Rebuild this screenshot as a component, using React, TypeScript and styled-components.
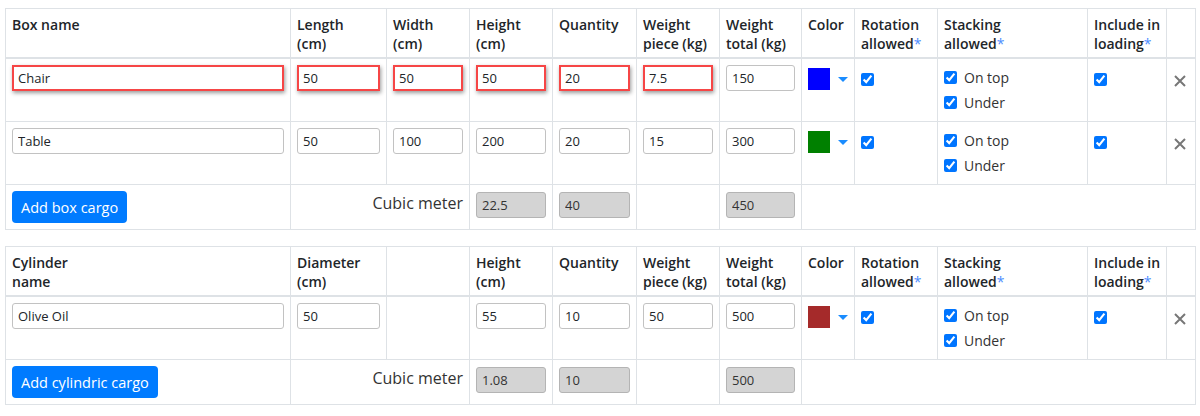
import * as React from 'react';
import styled, { createGlobalStyle } from 'styled-components';

const GlobalStyle = createGlobalStyle`
  body {
    margin: 0;
    padding: 8px 5px;
    background: #fff;
    color: #212529;
    font-family: "Open Sans", "Noto Sans", sans-serif;
  }
`;

const COLUMN_WIDTHS = [285, 96, 83, 83, 84, 83, 82, 53, 83, 150, 79, 29];

interface ICargoRow {
  name: string;
  dims: (string | null)[];
  quantity: string;
  weightPiece: string;
  weightTotal: string;
  color: string;
  invalid?: boolean;
}

interface ICargoTableProps {
  headers: string[][];
  rows: ICargoRow[];
  buttonLabel: string;
  totals: { volume: string; quantity: string; weight: string };
}

const TableElm = styled.table`
  width: 1190px;
  table-layout: fixed;
  border-collapse: collapse;
  margin-bottom: 16px;
  font-size: 15px;
`;

const HeadCell = styled.th`
  border: 1px solid #dee2e6;
  border-bottom: 2px solid #dee2e6;
  padding: 6px 6px 4px;
  text-align: left;
  vertical-align: top;
  font-weight: 600;
  line-height: 19px;
  font-size: 14px;
  white-space: nowrap;
  overflow: hidden;
`;

const Star = styled.span`
  color: #4c8dff;
  font-weight: 400;
`;

const Cell = styled.td<{ $align?: 'left' | 'right' }>`
  border: 1px solid #dee2e6;
  padding: 6px;
  vertical-align: top;
  text-align: ${(p) => p.$align || 'left'};
`;

const TextInput = styled.input<{ $invalid?: boolean }>`
  display: block;
  box-sizing: border-box;
  width: 100%;
  height: 26px;
  font-family: "Open Sans", sans-serif;
  font-size: 13px;
  color: #212529;
  background: #fff;
  border: ${(p) => (p.$invalid ? '2px solid #f64646' : '1px solid #c2c2c2')};
  border-radius: ${(p) => (p.$invalid ? '0' : '3px')};
  box-shadow: ${(p) => (p.$invalid ? '1px 2px 4px rgba(0, 0, 0, 0.4)' : 'none')};
  padding: 0 0 0 ${(p) => (p.$invalid ? '4px' : '5px')};
  outline: none;
`;

const ReadOnlyInput = styled(TextInput)`
  margin-top: 1px;
  background: #d4d4d4;
  border: 1px solid #b4b4b4;
  color: #333;
`;

const AddButton = styled.button`
  display: block;
  height: 32px;
  padding: 0 9px;
  border: none;
  border-radius: 4px;
  background: #007bff;
  color: #fff;
  font-family: "Open Sans", sans-serif;
  font-size: 14.5px;
  white-space: nowrap;
`;

const Caption = styled.span`
  display: block;
  font-size: 16px;
  line-height: 24px;
  color: #333;
`;

const ColorPicker = styled.div`
  display: flex;
  align-items: center;
  gap: 8px;
  margin-top: 3px;
`;

const Swatch = styled.span<{ $color: string }>`
  display: block;
  width: 23px;
  height: 22px;
  background: ${(p) => p.$color};
`;

const Caret = styled.span`
  width: 0;
  height: 0;
  border-left: 5px solid transparent;
  border-right: 5px solid transparent;
  border-top: 5px solid #1a8cff;
`;

const Check = styled.input.attrs({ type: 'checkbox' })`
  width: 13px;
  height: 13px;
  margin: 8px 0 0;
  accent-color: #0075ff;
  display: block;
`;

const StackList = styled.div`
  display: flex;
  flex-direction: column;
`;

const StackOption = styled.label`
  display: flex;
  align-items: center;
  gap: 7px;
  height: 25px;
  font-size: 14px;
  color: #333;

  input {
    margin: 0;
  }
`;

const RemoveButton = styled.button`
  display: block;
  margin: 10px 0 0 1px;
  padding: 0;
  border: none;
  background: none;
  line-height: 0;
`;

const CrossIcon = () => (
  <svg width="12" height="12" viewBox="0 0 12 12">
    <path d="M1 1 L11 11 M11 1 L1 11" stroke="#777" strokeWidth="2" />
  </svg>
);

const CargoTable = ({ headers, rows, buttonLabel, totals }: ICargoTableProps) => (
  <TableElm>
    <colgroup>
      {COLUMN_WIDTHS.map((w, i) => (
        <col key={i} style={{ width: w }} />
      ))}
    </colgroup>
    <thead>
      <tr>
        {headers.map((lines, i) => (
          <HeadCell key={i}>
            {lines.map((line, j) => (
              <React.Fragment key={j}>
                {j > 0 && <br />}
                {line.endsWith('*') ? (
                  <>
                    {line.slice(0, -1)}
                    <Star>*</Star>
                  </>
                ) : (
                  line
                )}
              </React.Fragment>
            ))}
          </HeadCell>
        ))}
      </tr>
    </thead>
    <tbody>
      {rows.map((row) => (
        <tr key={row.name}>
          <Cell>
            <TextInput $invalid={row.invalid} defaultValue={row.name} />
          </Cell>
          {row.dims.map((d, i) => (
            <Cell key={i}>{d !== null && <TextInput $invalid={row.invalid} defaultValue={d} />}</Cell>
          ))}
          <Cell>
            <TextInput $invalid={row.invalid} defaultValue={row.quantity} />
          </Cell>
          <Cell>
            <TextInput $invalid={row.invalid} defaultValue={row.weightPiece} />
          </Cell>
          <Cell>
            <TextInput defaultValue={row.weightTotal} />
          </Cell>
          <Cell>
            <ColorPicker>
              <Swatch $color={row.color} />
              <Caret />
            </ColorPicker>
          </Cell>
          <Cell>
            <Check defaultChecked />
          </Cell>
          <Cell>
            <StackList>
              <StackOption>
                <Check defaultChecked />
                On top
              </StackOption>
              <StackOption>
                <Check defaultChecked />
                Under
              </StackOption>
            </StackList>
          </Cell>
          <Cell>
            <Check defaultChecked />
          </Cell>
          <Cell>
            <RemoveButton aria-label="Remove">
              <CrossIcon />
            </RemoveButton>
          </Cell>
        </tr>
      ))}
      <tr>
        <Cell>
          <AddButton>{buttonLabel}</AddButton>
        </Cell>
        <Cell colSpan={2} $align="right">
          <Caption>Cubic meter</Caption>
        </Cell>
        <Cell>
          <ReadOnlyInput readOnly defaultValue={totals.volume} />
        </Cell>
        <Cell>
          <ReadOnlyInput readOnly defaultValue={totals.quantity} />
        </Cell>
        <Cell />
        <Cell>
          <ReadOnlyInput readOnly defaultValue={totals.weight} />
        </Cell>
        <Cell colSpan={5} />
      </tr>
    </tbody>
  </TableElm>
);

const sharedHeaders = [
  ['Height', '(cm)'],
  ['Quantity'],
  ['Weight', 'piece (kg)'],
  ['Weight', 'total (kg)'],
  ['Color'],
  ['Rotation', 'allowed*'],
  ['Stacking', 'allowed*'],
  ['Include in', 'loading*'],
  [],
];

const boxRows: ICargoRow[] = [
  { name: 'Chair', dims: ['50', '50', '50'], quantity: '20', weightPiece: '7.5', weightTotal: '150', color: '#0000ff', invalid: true },
  { name: 'Table', dims: ['50', '100', '200'], quantity: '20', weightPiece: '15', weightTotal: '300', color: '#008000' },
];

const cylinderRows: ICargoRow[] = [
  { name: 'Olive Oil', dims: ['50', null, '55'], quantity: '10', weightPiece: '50', weightTotal: '500', color: '#a52a2a' },
];

export default function App() {
  return (
    <>
      <GlobalStyle />
      <CargoTable
        headers={[['Box name'], ['Length', '(cm)'], ['Width', '(cm)'], ...sharedHeaders]}
        rows={boxRows}
        buttonLabel="Add box cargo"
        totals={{ volume: '22.5', quantity: '40', weight: '450' }}
      />
      <CargoTable
        headers={[['Cylinder', 'name'], ['Diameter', '(cm)'], [], ...sharedHeaders]}
        rows={cylinderRows}
        buttonLabel="Add cylindric cargo"
        totals={{ volume: '1.08', quantity: '10', weight: '500' }}
      />
    </>
  );
}
